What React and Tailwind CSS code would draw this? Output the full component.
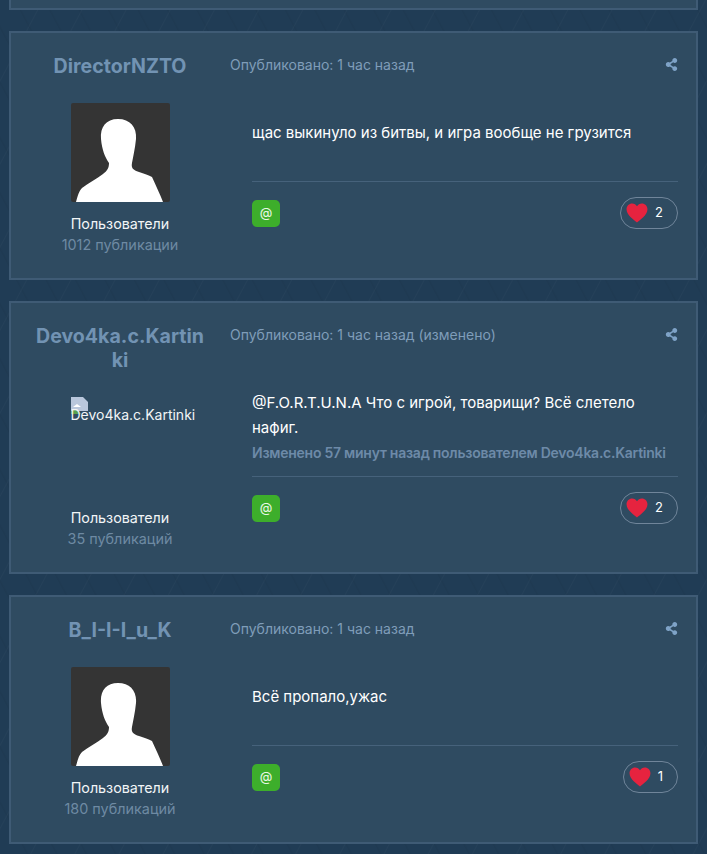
import { FaShareAlt } from "react-icons/fa";

const posts = [
  {
    name: "DirectorNZTO",
    date: "Опубликовано: 1 час назад",
    text: ["щас выкинуло из битвы, и игра вообще не грузится"],
    count: "1012 публикации",
    likes: 2,
  },
  {
    name: "Devo4ka.c.Kartinki",
    date: "Опубликовано: 1 час назад (изменено)",
    text: ["@F.O.R.T.U.N.A Что с игрой, товарищи? Всё слетело", "нафиг."],
    edited: "Изменено 57 минут назад пользователем Devo4ka.c.Kartinki",
    broken: true,
    count: "35 публикаций",
    likes: 2,
  },
  {
    name: "B_I-I-I_u_K",
    date: "Опубликовано: 1 час назад",
    text: ["Всё пропало,ужас"],
    count: "180 публикаций",
    likes: 1,
  },
];

function Avatar({ broken }) {
  if (broken) {
    return (
      <div className="relative h-[99px] w-[99px] text-[14px] leading-[21px] text-[#f2f5f7]">
        <svg className="absolute left-0 top-0" width="17" height="19" viewBox="0 0 17 19">
          <path d="M0 0h12l5 5v9H0z" fill="#b9c7dc" />
          <path d="M2 10l4-3 4 3z" fill="#fff" />
          <path d="M0 14l5-2 5 5H0z" fill="#58a14f" />
        </svg>
        <span className="absolute left-0 top-[7px] whitespace-nowrap">Devo4ka.c.Kartinki</span>
      </div>
    );
  }
  return (
    <svg className="rounded-[2px] bg-[#343434]" width="99" height="99" viewBox="0 0 99 99">
      <path
        d="M5 99C7 92 8 88 11 85C17 80 26 76 32 71C36 68 38 65 38 60C34 54 31 47 30 36C29 24 35 16 47 16C59 16 66 24 65 36C64 46 62 54 61 60C60 65 62 67 68 69C73 71 78 72 81 74C85 83 89 91 92 99Z"
        fill="#fff"
      />
    </svg>
  );
}

function Likes({ likes }) {
  return (
    <div className="flex h-[32px] items-center rounded-full border border-[#70859a] pl-[5px] pr-[14px]">
      <svg width="22" height="20" viewBox="0 0 24 22" className="blur-[0.5px]">
        <path
          d="M12 21.5C9 18.5 0.5 13.5 0.5 6.8C0.5 3 3.4 0.5 6.6 0.5C9 0.5 11 1.7 12 3.6C13 1.7 15 0.5 17.4 0.5C20.6 0.5 23.5 3 23.5 6.8C23.5 13.5 15 18.5 12 21.5Z"
          fill="#e6233f"
        />
      </svg>
      <span className="ml-[7px] text-[13px] text-white">{likes}</span>
    </div>
  );
}

function Post({ post }) {
  return (
    <div className="flex border-2 border-[#3f5b75] bg-[#2f4b61]">
      <div className="flex w-[218px] shrink-0 flex-col items-center pb-[23px] pt-[21px] text-center">
        <h3 className="w-[176px] break-all text-[19.6px] font-bold leading-[24px] text-[#7293b3]">
          {post.name}
        </h3>
        <div className="mt-[25px]">
          <Avatar broken={post.broken} />
        </div>
        <div className="mt-[11px] text-[14.3px] leading-[21px] text-[#f2f5f7]">Пользователи</div>
        <div className="text-[14.4px] leading-[21px] text-[#6e8aa3]">{post.count}</div>
      </div>
      <div className="ml-[1px] min-w-0 flex-1 pr-[18px] pt-[21px]">
        <div className="flex h-[21px] items-center justify-between text-[14px] text-[#7f9db9]">
          <span>{post.date}</span>
          <FaShareAlt className="text-[13px] text-[#7fa3c7]" />
        </div>
        <div className="ml-[22px]">
          <div className={"mt-[45px] border-b border-[#46627b] " + (post.edited ? "pb-[13px]" : "pb-[36px]")}>
            {post.text.map((line) => (
              <p key={line} className="text-[15px] leading-[25px] text-white">
                {line}
              </p>
            ))}
            {post.edited && (
              <p className="mt-[3px] whitespace-nowrap text-[14px] font-semibold leading-[20px] tracking-[-0.25px] text-[#6d8aa8]">
                {post.edited}
              </p>
            )}
          </div>
          <div className="mt-[15px] flex items-start justify-between">
            <div className="mt-[3px] flex h-[27px] w-[28px] items-center justify-center rounded-[5px] bg-[#3dae2b] pb-[2px] text-[13px] text-[#e9f7e5]">
              @
            </div>
            <Likes likes={post.likes} />
          </div>
        </div>
      </div>
    </div>
  );
}

export default function App() {
  return (
    <div className="h-[854px] overflow-hidden bg-[#203c55] bg-[repeating-linear-gradient(118deg,transparent_0,transparent_37px,rgba(255,255,255,0.025)_38px,transparent_39px),repeating-linear-gradient(62deg,transparent_0,transparent_23px,rgba(0,0,0,0.04)_24px,transparent_26px)] px-[9px] font-['Inter','Noto_Sans',sans-serif]">
      <div className="h-[10px] border-2 border-t-0 border-[#3f5b75] bg-[#2f4b61]" />
      <div className="mt-[21px] flex flex-col gap-[21px]">
        {posts.map((post) => (
          <Post key={post.name} post={post} />
        ))}
      </div>
    </div>
  );
}
